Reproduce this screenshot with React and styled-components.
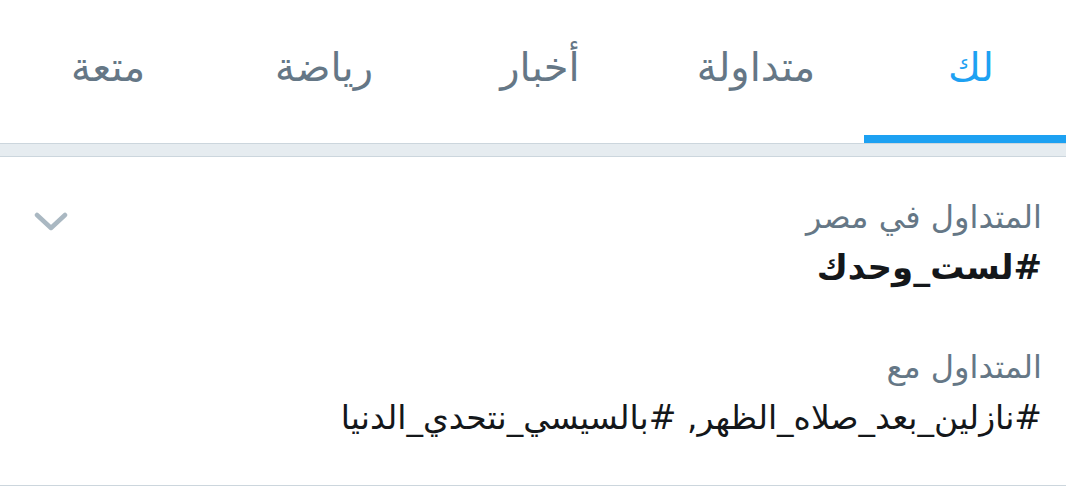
import React, { useState } from 'react';
import styled, { createGlobalStyle } from 'styled-components';

const GlobalStyle = createGlobalStyle`
  html, body {
    margin: 0;
    padding: 0;
    background: #ffffff;
    overflow: hidden;
  }
  body {
    font-family: "DejaVu Sans", "Noto Sans", sans-serif;
  }
`;

const tabs = [
    { label: 'لك', width: 202, shift: 12 },
    { label: 'متداولة', width: 216 },
    { label: 'أخبار', width: 216 },
    { label: 'رياضة', width: 216 },
    { label: 'متعة', width: 216 },
];

const App = () => {
    const [active, setActive] = useState(0);

    return (
        <Page dir="rtl">
            <GlobalStyle />
            <TabBar>
                {tabs.map((tab, index) => (
                    <Tab
                        key={tab.label}
                        $width={tab.width}
                        $shift={tab.shift || 0}
                        $active={active === index}
                        onClick={() => setActive(index)}
                    >
                        {tab.label}
                    </Tab>
                ))}
            </TabBar>
            <Divider />
            <TrendCard>
                <div className="trend-body">
                    <Meta>المتداول في مصر</Meta>
                    <TrendName>#لست_وحدك</TrendName>
                    <Meta className="with">المتداول مع</Meta>
                    <Related>#نازلين_بعد_صلاه_الظهر, #بالسيسي_نتحدي_الدنيا</Related>
                </div>
                <Caret aria-label="more">
                    <svg width="34" height="20" viewBox="0 0 34 20">
                        <path
                            d="M3 3 L17 16 L31 3"
                            fill="none"
                            stroke="#aab8c2"
                            strokeWidth="4.5"
                            strokeLinecap="round"
                            strokeLinejoin="round"
                        />
                    </svg>
                </Caret>
            </TrendCard>
        </Page>
    );
};

export default App;


const Page = styled.div`
width: 1066px;
height: 491px;
background-color: #ffffff;
`;

const TabBar = styled.div`
display: flex;
height: 143px;
`;

const Tab = styled.div`
width: ${(props) => props.$width}px;
flex-shrink: 0;
box-sizing: border-box;
padding-left: ${(props) => props.$shift}px;
display: flex;
justify-content: center;
align-items: center;
padding-bottom: 2px;
font-size: 40px;
color: ${(props) => props.$active ? '#1da1f2' : '#657786'};
border-bottom: 8px solid ${(props) => props.$active ? '#1da1f2' : 'transparent'};
cursor: pointer;
`;

const Divider = styled.div`
height: 12px;
background-color: #e6ecf0;
border-top: 1px solid #ccd6dd;
border-bottom: 1px solid #ccd6dd;
`;

const TrendCard = styled.div`
display: flex;
justify-content: space-between;
align-items: flex-start;
padding: 36px 24px 0 24px;
height: 292px;
border-bottom: 1px solid #ccd6dd;

.trend-body{
    display: flex;
    flex-direction: column;
}
.with{
    margin-top: 50px;
}
`;

const Meta = styled.div`
font-size: 32px;
line-height: 48px;
color: #657786;
`;

const TrendName = styled.div`
font-size: 34px;
font-weight: 700;
line-height: 52px;
color: #14171a;
`;

const Related = styled.div`
font-size: 33px;
line-height: 54px;
color: #14171a;
`;

const Caret = styled.div`
margin-top: 19px;
margin-left: 10px;
`;
